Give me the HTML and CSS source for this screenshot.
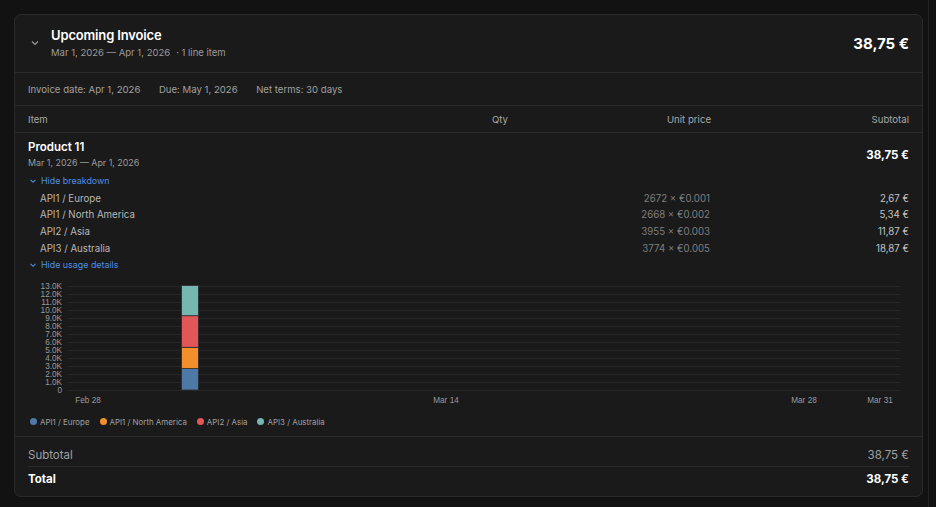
FILE: index.html
```html
<!DOCTYPE html>
<html>
<head>
<meta charset="utf-8">
<link rel="stylesheet" href="styles.css">
</head>
<body>
<div class="page">
  <div class="card">
    <div class="head">
      <svg class="chev" width="10" height="10" viewBox="0 0 10 10"><path d="M2 3.5 L5 6.5 L8 3.5" fill="none" stroke="#9a9a9a" stroke-width="1.2"/></svg>
      <div class="head-text">
        <div class="title">Upcoming Invoice</div>
        <div class="sub"><span>Mar 1, 2026 — Apr 1, 2026</span><span class="items">· 1 line item</span></div>
      </div>
      <div class="head-amount">38,75 €</div>
    </div>
    <div class="meta">
      <span>Invoice date: Apr 1, 2026</span>
      <span>Due: May 1, 2026</span>
      <span>Net terms: 30 days</span>
    </div>
    <div class="thead">
      <div class="c-item">Item</div>
      <div class="c-qty">Qty</div>
      <div class="c-unit">Unit price</div>
      <div class="c-sub">Subtotal</div>
    </div>
    <div class="product">
      <div class="prod-row">
        <div>
          <div class="prod-name">Product 11</div>
          <div class="prod-date">Mar 1, 2026 — Apr 1, 2026</div>
        </div>
        <div class="prod-amount">38,75 €</div>
      </div>
      <div class="toggle"><svg width="8" height="8" viewBox="0 0 8 8"><path d="M1.5 2.8 L4 5.3 L6.5 2.8" fill="none" stroke="#4f8fe6" stroke-width="1.1"/></svg>Hide breakdown</div>
      <div class="rows">
        <div class="brow"><div class="b-name">API1 / Europe</div><div class="b-unit">2672 × €0.001</div><div class="b-sub">2,67 €</div></div>
        <div class="brow"><div class="b-name">API1 / North America</div><div class="b-unit">2668 × €0.002</div><div class="b-sub">5,34 €</div></div>
        <div class="brow"><div class="b-name">API2 / Asia</div><div class="b-unit">3955 × €0.003</div><div class="b-sub">11,87 €</div></div>
        <div class="brow"><div class="b-name">API3 / Australia</div><div class="b-unit">3774 × €0.005</div><div class="b-sub">18,87 €</div></div>
      </div>
      <div class="toggle t2"><svg width="8" height="8" viewBox="0 0 8 8"><path d="M1.5 2.8 L4 5.3 L6.5 2.8" fill="none" stroke="#4f8fe6" stroke-width="1.1"/></svg>Hide usage details</div>
      <svg class="chart" width="880" height="128" viewBox="0 0 880 128">
        <g stroke="#262626" stroke-width="1">
          <line x1="40" x2="872" y1="6.5" y2="6.5"/>
          <line x1="40" x2="872" y1="14.5" y2="14.5"/>
          <line x1="40" x2="872" y1="22.5" y2="22.5"/>
          <line x1="40" x2="872" y1="30.5" y2="30.5"/>
          <line x1="40" x2="872" y1="38.5" y2="38.5"/>
          <line x1="40" x2="872" y1="46.5" y2="46.5"/>
          <line x1="40" x2="872" y1="54.5" y2="54.5"/>
          <line x1="40" x2="872" y1="62.5" y2="62.5"/>
          <line x1="40" x2="872" y1="70.5" y2="70.5"/>
          <line x1="40" x2="872" y1="78.5" y2="78.5"/>
          <line x1="40" x2="872" y1="86.5" y2="86.5"/>
          <line x1="40" x2="872" y1="94.5" y2="94.5"/>
          <line x1="40" x2="872" y1="102.5" y2="102.5"/>
          <line x1="40" x2="872" y1="110.5" y2="110.5"/>
        </g>
        <g class="ylab" text-anchor="end">
          <text x="34" y="9.3">13.0K</text>
          <text x="34" y="17.3">12.0K</text>
          <text x="34" y="25.3">11.0K</text>
          <text x="34" y="33.3">10.0K</text>
          <text x="34" y="41.3">9.0K</text>
          <text x="34" y="49.3">8.0K</text>
          <text x="34" y="57.3">7.0K</text>
          <text x="34" y="65.3">6.0K</text>
          <text x="34" y="73.3">5.0K</text>
          <text x="34" y="81.3">4.0K</text>
          <text x="34" y="89.3">3.0K</text>
          <text x="34" y="97.3">2.0K</text>
          <text x="34" y="105.3">1.0K</text>
          <text x="34" y="113.3">0</text>
        </g>
        <g stroke="#2b2b2b" stroke-width="0.8">
          <rect x="153.5" y="88.6" width="17" height="21.4" fill="#4e79a7"/>
          <rect x="153.5" y="67.3" width="17" height="21.3" fill="#f28e2b"/>
          <rect x="153.5" y="35.7" width="17" height="31.6" fill="#e15759"/>
          <rect x="153.5" y="5.5" width="17" height="30.2" fill="#76b7b2"/>
        </g>
        <g class="xlab" text-anchor="middle">
          <text x="60" y="123">Feb 28</text>
          <text x="418" y="123">Mar 14</text>
          <text x="776" y="123">Mar 28</text>
          <text x="852" y="123">Mar 31</text>
        </g>
      </svg>
      <div class="legend">
        <span class="lg"><i class="dot d1"></i>API1 / Europe</span>
        <span class="lg"><i class="dot d2"></i>API1 / North America</span>
        <span class="lg"><i class="dot d3"></i>API2 / Asia</span>
        <span class="lg"><i class="dot d4"></i>API3 / Australia</span>
      </div>
    </div>
    <div class="totals">
      <div class="trow subtotal"><span>Subtotal</span><span>38,75 €</span></div>
      <div class="trow total"><span>Total</span><span>38,75 €</span></div>
    </div>
  </div>
  <div class="rail"></div>
</div>
</body>
</html>
```
FILE: styles.css
```css
* { box-sizing: border-box; }
html, body { margin: 0; padding: 0; background: #121212; }
body { font-family: Inter, "Noto Sans", sans-serif; color: #e6e6e6; }
.page { display: flex; padding: 14px 0 0 14px; height: 507px; }
.card {
  width: 909px;
  height: 483px;
  background: #1a1a1a;
  border: 1px solid #2a2a2a;
  border-radius: 7px;
  overflow: hidden;
}
.rail { width: 1px; background: #232323; margin-left: 5px; margin-top: -14px; height: 507px; }
.head { display: flex; align-items: center; padding: 10px 13px 11px 13px; border-bottom: 1px solid #2a2a2a; height: 58px; }
.chev { margin: 0 11px 0 2px; }
.head-text { flex: 1; }
.title { font-size: 13px; font-weight: 600; line-height: 18px; color: #fff; letter-spacing: -0.15px; }
.sub { font-size: 9.5px; line-height: 14px; color: #9c9c9c; margin-top: 2px; }
.sub .items { margin-left: 6px; }
.head-amount { font-size: 15px; font-weight: 700; color: #fff; }
.meta { display: flex; gap: 18.5px; padding: 0 13px; height: 33px; align-items: center; font-size: 9.6px; color: #a0a0a0; border-bottom: 1px solid #2a2a2a; }
.thead { display: grid; grid-template-columns: 1fr 120px 203px 198px; padding: 0 13px; height: 27px; align-items: center; font-size: 9.6px; color: #a8a8a8; border-bottom: 1px solid #2a2a2a; }
.thead > div:not(.c-item) { text-align: right; }
.product { padding: 6px 13px 0 13px; border-bottom: 1px solid #2a2a2a; height: 304px; }
.prod-row { display: flex; justify-content: space-between; align-items: center; }
.prod-name { font-size: 11.5px; font-weight: 600; line-height: 16px; color: #fff; }
.prod-date { font-size: 8.9px; line-height: 14px; color: #9c9c9c; margin-top: 1px; }
.prod-amount { font-size: 11.5px; font-weight: 700; color: #fff; }
.toggle { display: flex; align-items: center; gap: 4px; font-size: 8.9px; line-height: 14px; color: #4f8fe6; margin-top: 4px; padding-left: 1px; }
.rows { padding-left: 12px; margin-top: 2px; }
.brow { display: grid; grid-template-columns: 1fr 199px 198px; height: 16.67px; align-items: center; font-size: 9.7px; color: #b8b8b8; }
.b-unit { text-align: right; color: #7f7f7f; padding-right: 1px; }
.b-sub { text-align: right; color: #c4c4c4; font-weight: 400; }
.toggle.t2 { margin-top: 1px; }
.chart { display: block; margin-top: 8px; }
.chart text { font-family: "Liberation Sans", Arial, sans-serif; font-size: 8.2px; fill: #9a9a9a; }
.legend { display: flex; gap: 10px; margin-top: 9px; font-size: 7.9px; color: #a0a0a0; padding-left: 2px; }
.lg { display: flex; align-items: center; gap: 3px; }
.dot { width: 7px; height: 7px; border-radius: 50%; display: inline-block; }
.d1 { background: #4e79a7; }
.d2 { background: #f28e2b; }
.d3 { background: #e15759; }
.d4 { background: #76b7b2; }
.totals { padding: 0 13px; }
.trow { display: flex; justify-content: space-between; align-items: center; }
.subtotal { height: 30px; font-size: 11.5px; color: #a0a0a0; border-bottom: 1px solid #2a2a2a; padding-top: 6px; }
.total { height: 24px; font-size: 11.5px; font-weight: 700; color: #fff; }
```
